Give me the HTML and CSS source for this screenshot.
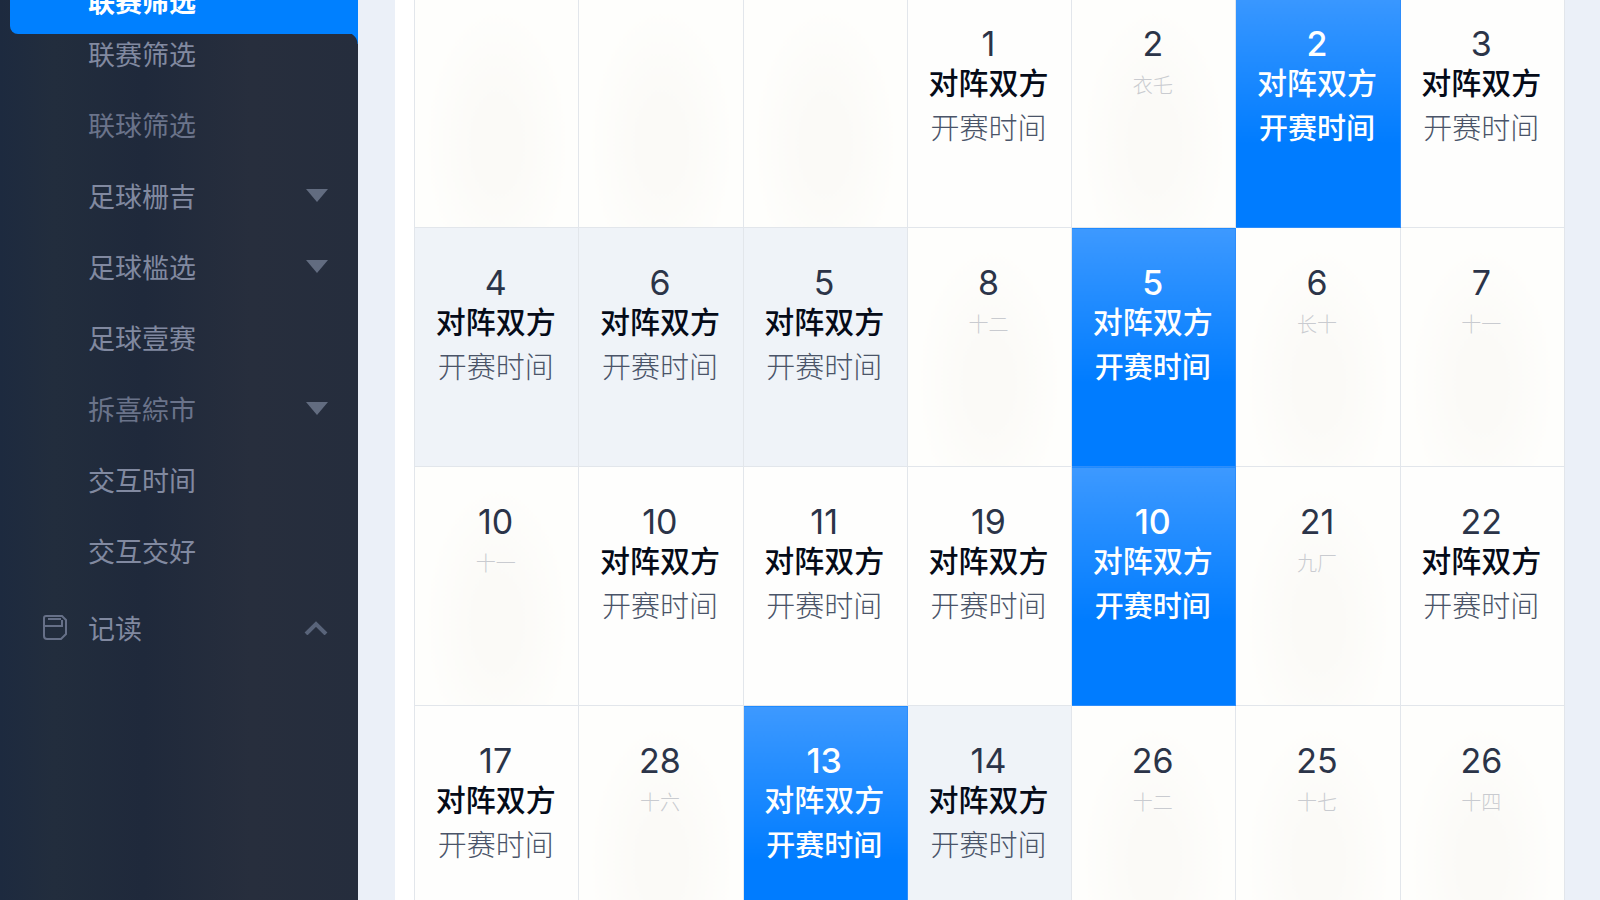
FILE: index.html
```html
<!DOCTYPE html>
<html lang="zh-CN">
<head>
    <meta charset="UTF-8">
    <meta name="viewport" content="width=device-width, initial-scale=1.0">
    <title>赛事日历</title>
    <link rel="stylesheet" href="styles.css">
</head>
<body>
    <nav class="sidebar">
        <a href="#" class="nav-item active">联赛筛选</a>

        <div class="nav-list">
            <a href="#" class="nav-item">联赛筛选</a>
            <a href="#" class="nav-item dim">联球筛选</a>
            <a href="#" class="nav-item">足球栅吉<span class="caret"></span></a>
            <a href="#" class="nav-item">足球槛选<span class="caret"></span></a>
            <a href="#" class="nav-item">足球壹赛</a>
            <a href="#" class="nav-item dim">拆喜綜市<span class="caret"></span></a>
            <a href="#" class="nav-item">交互时间</a>
            <a href="#" class="nav-item">交互交好</a>
            <a href="#" class="nav-item parent">
                <svg class="nav-icon" viewBox="0 0 26 26" fill="none" stroke="currentColor" stroke-width="2">
                    <path d="M4 2H20L24 6V20L19 25H5Q2 25 2 22V4Q2 2 4 2Z"/>
                    <path d="M2 12H20V6M6 5H19"/>
                </svg>
                记读
                <svg class="chevron" viewBox="0 0 24 16" fill="none" stroke="currentColor" stroke-width="4">
                    <path d="M2 15L12 5L22 15"/>
                </svg>
            </a>
        </div>
    </nav>

    <main class="content">
        <div class="panel">
            <table class="calendar">
                <tbody>
                    <tr>
                        <td class="rest"></td>
                        <td class="rest"></td>
                        <td class="rest"></td>
                        <td><div class="num">1</div><div class="teams">对阵双方</div><div class="time">开赛时间</div></td>
                        <td class="rest"><div class="num">2</div><div class="lunar">衣乇</div></td>
                        <td class="selected"><div class="num">2</div><div class="teams">对阵双方</div><div class="time">开赛时间</div></td>
                        <td><div class="num">3</div><div class="teams">对阵双方</div><div class="time">开赛时间</div></td>
                    </tr>
                    <tr>
                        <td class="tinted"><div class="num">4</div><div class="teams">对阵双方</div><div class="time">开赛时间</div></td>
                        <td class="tinted"><div class="num">6</div><div class="teams">对阵双方</div><div class="time">开赛时间</div></td>
                        <td class="tinted"><div class="num">5</div><div class="teams">对阵双方</div><div class="time">开赛时间</div></td>
                        <td class="rest"><div class="num">8</div><div class="lunar">十二</div></td>
                        <td class="selected"><div class="num">5</div><div class="teams">对阵双方</div><div class="time">开赛时间</div></td>
                        <td class="rest"><div class="num">6</div><div class="lunar">长十</div></td>
                        <td class="rest"><div class="num">7</div><div class="lunar">十一</div></td>
                    </tr>
                    <tr>
                        <td class="rest"><div class="num">10</div><div class="lunar">十一</div></td>
                        <td><div class="num">10</div><div class="teams">对阵双方</div><div class="time">开赛时间</div></td>
                        <td><div class="num">11</div><div class="teams">对阵双方</div><div class="time">开赛时间</div></td>
                        <td><div class="num">19</div><div class="teams">对阵双方</div><div class="time">开赛时间</div></td>
                        <td class="selected"><div class="num">10</div><div class="teams">对阵双方</div><div class="time">开赛时间</div></td>
                        <td class="rest"><div class="num">21</div><div class="lunar">九厂</div></td>
                        <td><div class="num">22</div><div class="teams">对阵双方</div><div class="time">开赛时间</div></td>
                    </tr>
                    <tr>
                        <td><div class="num">17</div><div class="teams">对阵双方</div><div class="time">开赛时间</div></td>
                        <td class="rest"><div class="num">28</div><div class="lunar">十六</div></td>
                        <td class="selected"><div class="num">13</div><div class="teams">对阵双方</div><div class="time">开赛时间</div></td>
                        <td class="tinted"><div class="num">14</div><div class="teams">对阵双方</div><div class="time">开赛时间</div></td>
                        <td class="rest"><div class="num">26</div><div class="lunar">十二</div></td>
                        <td class="rest"><div class="num">25</div><div class="lunar">十七</div></td>
                        <td class="rest"><div class="num">26</div><div class="lunar">十四</div></td>
                    </tr>
                </tbody>
            </table>
        </div>
    </main>
</body>
</html>
```
FILE: styles.css
```css
* {
    box-sizing: border-box;
}

body {
    display: flex;
    height: 100vh;
    margin: 0;
    overflow: hidden;
    font-family: Inter, "Noto Sans CJK SC", sans-serif;
    background: #ebf0f8;
}

/* Sidebar */
.sidebar {
    width: 358px;
    flex-shrink: 0;
    background: linear-gradient(90deg, #1d2a3f 0%, #222d3d 15%, #1f293b 40%, #272e3d 70%, #252d3d 100%);
}

.nav-item {
    position: relative;
    display: flex;
    align-items: center;
    height: 71px;
    padding: 0 30px 0 88px;
    font-size: 27px;
    color: #8189a0;
    text-decoration: none;
}

.nav-item.dim {
    color: #6a738a;
}

.nav-item.active {
    height: 68px;
    margin: -34px 0 0 10px;
    padding-left: 78px;
    font-weight: 700;
    color: #fff;
    background: #0080ff;
    border-bottom-left-radius: 8px;
}

/* inverted corner under the active item */
.nav-item.active::after {
    content: '';
    position: absolute;
    top: 100%;
    right: 0;
    width: 12px;
    height: 10px;
    background: radial-gradient(circle at 0 100%, transparent 11px, #0080ff 12px);
}

.nav-list {
    margin-top: -16px;
}

.nav-item.parent {
    height: 82px;
    padding-left: 42px;
}

.nav-icon {
    width: 26px;
    height: 26px;
    margin-right: 20px;
    color: #667088;
}

.caret {
    margin-left: auto;
    border: 11px solid transparent;
    border-top: 13px solid #626c80;
    border-bottom: 0;
}

.chevron {
    width: 24px;
    height: 16px;
    margin-left: auto;
    color: #59647a;
}

/* Calendar */
.content {
    flex: 1;
    padding: 0 35px 0 37px;
}

.panel {
    margin-top: -12px;
    padding-left: 19px;
    background: #fff;
}

.calendar {
    width: 100%;
    table-layout: fixed;
    border-collapse: collapse;
}

.calendar td {
    height: 239px;
    padding: 35px 2px 0 0;
    vertical-align: top;
    text-align: center;
    color: #2b3448;
    background: #fefefd;
    border: 1px solid #e2e6eb;
}

.calendar td.rest {
    background: radial-gradient(ellipse at 50% 65%, #fbfaf7 20%, #fefefc 65%);
}

.calendar td.tinted {
    background: #eff3f8;
}

.calendar td.selected {
    color: #fff;
    background: linear-gradient(#3d99ff, #007cff 65%);
    border-color: #2d8dfb;
}

.num {
    font-size: 34px;
    line-height: 40px;
}

.teams {
    font-size: 30px;
    line-height: 38px;
    font-weight: 500;
    color: #050b18;
}

.time {
    font-size: 29px;
    line-height: 54px;
    font-weight: 300;
    color: #4a5468;
}

.selected .num,
.selected .time {
    font-weight: 500;
}

.selected .teams,
.selected .time {
    color: #fff;
}

.lunar {
    font-size: 20px;
    line-height: 44px;
    font-weight: 300;
    color: #c9cbd0;
}
```
